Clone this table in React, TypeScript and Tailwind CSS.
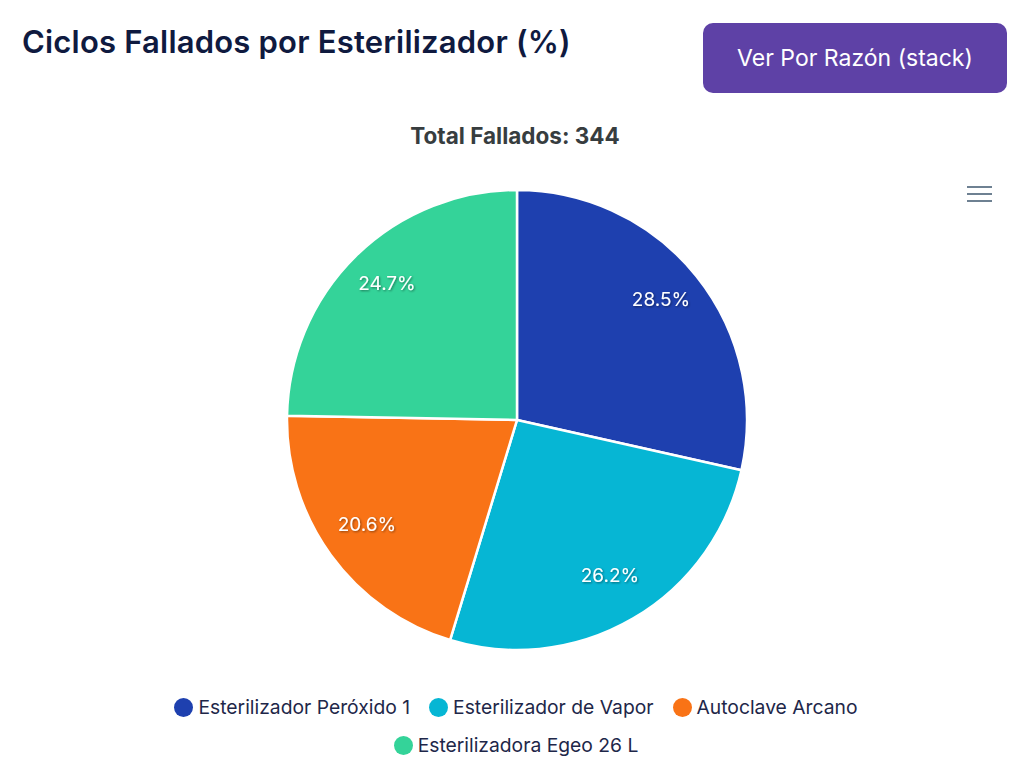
import React from "react";

const slices = [
    { label: "Esterilizador Peróxido 1", value: 28.5, color: "#1e40af", lx: 661, ly: 299 },
    { label: "Esterilizador de Vapor", value: 26.2, color: "#06b6d4", lx: 610, ly: 575 },
    { label: "Autoclave Arcano", value: 20.6, color: "#f97316", lx: 367, ly: 524 },
    { label: "Esterilizadora Egeo 26 L", value: 24.7, color: "#34d399", lx: 387, ly: 283 },
];

// svg box is 480x480, placed so the pie centre sits at page (517, 420)
const CX = 240;
const CY = 240;
const R = 230;
const OX = 277;
const OY = 180;

function point(deg: number) {
    const a = (deg * Math.PI) / 180;
    return [CX + R * Math.sin(a), CY - R * Math.cos(a)];
}

function slicePath(start: number, end: number) {
    const [x1, y1] = point(start);
    const [x2, y2] = point(end);
    const large = end - start > 180 ? 1 : 0;
    return `M ${CX} ${CY} L ${x1} ${y1} A ${R} ${R} 0 ${large} 1 ${x2} ${y2} Z`;
}

function PieChart() {
    let acc = 0;
    return (
        <svg width={480} height={480} viewBox="0 0 480 480" className="block">
            <defs>
                <filter id="lblShadow" x="-20%" y="-20%" width="140%" height="160%">
                    <feDropShadow dx="1" dy="1" stdDeviation="1" floodColor="#000" floodOpacity="0.45" />
                </filter>
            </defs>
            {slices.map((s) => {
                const start = (acc / 100) * 360;
                acc += s.value;
                const end = (acc / 100) * 360;
                return (
                    <path key={s.label} d={slicePath(start, end)} fill={s.color} stroke="#ffffff" strokeWidth={2.5} strokeLinejoin="round" />
                );
            })}
            {slices.map((s) => (
                <text
                    key={s.label + "-l"}
                    x={s.lx - OX}
                    y={s.ly - OY}
                    textAnchor="middle"
                    dominantBaseline="central"
                    fill="#ffffff"
                    fontSize={19}
                    fontFamily="Inter, sans-serif"
                    filter="url(#lblShadow)"
                >
                    {s.value}%
                </text>
            ))}
        </svg>
    );
}

export default function App() {
    return (
        <div className="w-[1024px] h-[784px] bg-white overflow-hidden font-['Inter',sans-serif]">
            {/* Header */}
            <div className="flex items-start justify-between pl-[22px] pr-[17px] pt-[23px]">
                <h1 className="mt-[1px] text-[31px] leading-[36px] font-semibold tracking-[0.2px] text-[#0f1a3f]">
                    Ciclos Fallados por Esterilizador (%)
                </h1>
                <button className="w-[304px] h-[70px] rounded-[10px] bg-[#5e41a6] text-white text-[23px]">
                    Ver Por Razón (stack)
                </button>
            </div>

            {/* Chart */}
            <div className="relative">
                <p className="mt-[30px] text-center text-[22.5px] leading-[26px] font-bold text-[#373d3f] pl-[6px]">
                    Total Fallados: 344
                </p>

                <div className="absolute right-[32px] top-[63px] flex flex-col gap-[5px] w-[25px]">
                    <span className="h-[2px] bg-[#6e8192]"></span>
                    <span className="h-[2px] bg-[#6e8192]"></span>
                    <span className="h-[2px] bg-[#6e8192]"></span>
                </div>

                <div className="mt-[31px] flex justify-center pl-[10px]">
                    <PieChart />
                </div>

                {/* Legend */}
                <div className="mt-[33px] flex flex-wrap justify-center gap-x-[19px] gap-y-[10px] pl-[158px] pr-[150px] text-[19.3px] leading-[28px] text-[#1e2749]">
                    {slices.map((s) => (
                        <div key={s.label} className="flex items-center gap-[5px]">
                            <span className="w-[19px] h-[19px] rounded-full" style={{ backgroundColor: s.color }}></span>
                            <span>{s.label}</span>
                        </div>
                    ))}
                </div>
            </div>
        </div>
    );
}
